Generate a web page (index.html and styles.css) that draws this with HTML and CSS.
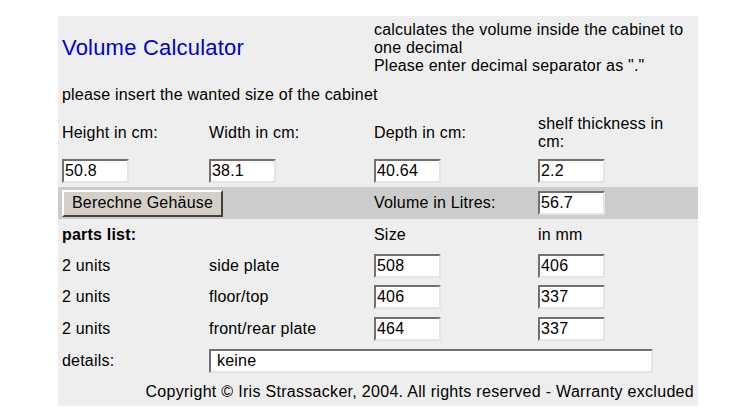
FILE: index.html
```html
<!DOCTYPE html>
<html lang="en">
<head>
  <meta charset="UTF-8">
  <title>Volume Calculator</title>
  <link rel="stylesheet" href="styles.css">
</head>
<body>

  <form id="calc-form">
    <table class="calc">
      <colgroup>
        <col class="col-a">
        <col class="col-b">
        <col class="col-c">
        <col class="col-d">
      </colgroup>
      <tr class="row-head">
        <td colspan="2" class="title">Volume Calculator</td>
        <td colspan="2">calculates the volume inside the cabinet to one decimal<br>Please enter decimal separator as "."</td>
      </tr>
      <tr class="row-intro">
        <td colspan="4">please insert the wanted size of the cabinet</td>
      </tr>
      <tr class="row-labels">
        <td>Height in cm:</td>
        <td>Width in cm:</td>
        <td>Depth in cm:</td>
        <td>shelf thickness in<br>cm:</td>
      </tr>
      <tr class="row-inputs">
        <td><input type="text" class="num" name="height" value="50.8"></td>
        <td><input type="text" class="num" name="width" value="38.1"></td>
        <td><input type="text" class="num" name="depth" value="40.64"></td>
        <td><input type="text" class="num" name="shelf" value="2.2"></td>
      </tr>
      <tr class="row-band">
        <td colspan="2"><button type="button" class="calc-btn">Berechne Gehäuse</button></td>
        <td>Volume in Litres:</td>
        <td><input type="text" class="num" name="volume" value="56.7"></td>
      </tr>
      <tr class="row-parts">
        <td><b>parts list:</b></td>
        <td></td>
        <td>Size</td>
        <td>in mm</td>
      </tr>
      <tr class="row-unit first">
        <td>2 units</td>
        <td>side plate</td>
        <td><input type="text" class="num" value="508"></td>
        <td><input type="text" class="num" value="406"></td>
      </tr>
      <tr class="row-unit">
        <td>2 units</td>
        <td>floor/top</td>
        <td><input type="text" class="num" value="406"></td>
        <td><input type="text" class="num" value="337"></td>
      </tr>
      <tr class="row-unit">
        <td>2 units</td>
        <td>front/rear plate</td>
        <td><input type="text" class="num" value="464"></td>
        <td><input type="text" class="num" value="337"></td>
      </tr>
      <tr class="row-unit">
        <td>details:</td>
        <td colspan="3"><input type="text" class="wide" value="keine"></td>
      </tr>
      <tr class="row-copy">
        <td colspan="4">Copyright © Iris Strassacker, 2004. All rights reserved - Warranty excluded</td>
      </tr>
    </table>
  </form>

</body>
</html>
```

FILE: styles.css
```css
body {
  font-family: "Liberation Sans", Arial, sans-serif;
  font-size: 16px;
  line-height: 18px;
  letter-spacing: 0.2px;
  color: #000;
  background-color: #fff;
  margin: 16px 0 0 58px;
}
form {
  margin: 0;
}
.calc {
  width: 640px;
  table-layout: fixed;
  border-collapse: collapse;
  background-color: #eeeeee;
}
.col-a { width: 147px; }
.col-b { width: 165px; }
.col-c { width: 164px; }
.col-d { width: 164px; }
.calc td {
  padding: 0 4px;
  vertical-align: middle;
}
.row-head { height: 63px; }
.row-intro { height: 32px; }
.row-labels { height: 44px; }
.row-inputs { height: 32px; }
.row-band { height: 32px; background-color: #cccccc; }
.row-parts { height: 31px; }
.row-unit { height: 32px; }
.row-unit.first { height: 31px; }
.row-copy { height: 29px; }
.row-copy td {
  text-align: right;
  letter-spacing: 0.3px;
}
.title {
  color: #0000cc;
  font-size: 22px;
  line-height: 26px;
}
.calc input {
  font-family: "Liberation Sans", Arial, sans-serif;
  font-size: 16px;
  letter-spacing: 0.2px;
  height: 24px;
  padding: 0 1px;
  margin: 0;
  box-sizing: border-box;
  background-color: #fff;
  border-width: 2px;
  border-style: solid;
  border-color: #707070 #e4e4e4 #e4e4e4 #707070;
  vertical-align: middle;
}
.calc input.num {
  width: 67px;
}
.calc input.wide {
  width: 444px;
  padding-left: 6px;
}
.calc-btn {
  font-family: "Liberation Sans", Arial, sans-serif;
  font-size: 16px;
  letter-spacing: 0.2px;
  height: 27px;
  width: 161px;
  padding: 0 6px;
  margin: 0;
  background-color: #d4d0c8;
  border-width: 2px;
  border-style: solid;
  border-color: #ffffff #404040 #404040 #ffffff;
  cursor: pointer;
  vertical-align: middle;
}
```
